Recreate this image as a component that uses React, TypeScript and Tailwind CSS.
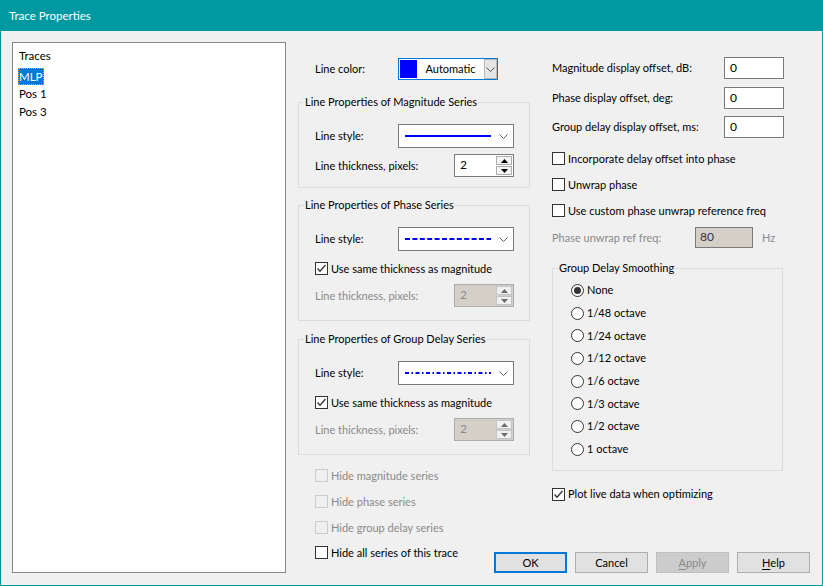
import React from "react";

type Kind = "solid" | "dash" | "dashdot";

function Chevron({ color = "#606060" }: { color?: string }) {
  return (
    <svg width="9" height="5" viewBox="0 0 9 5" className="shrink-0">
      <path d="M0.5 0.5 L4.5 4.5 L8.5 0.5" stroke={color} strokeWidth="1" fill="none" />
    </svg>
  );
}

function CheckBox({ label, checked = false, disabled = false }: { label: string; checked?: boolean; disabled?: boolean }) {
  return (
    <div className="flex h-[13px] items-center">
      <span
        className={`flex h-[13px] w-[13px] shrink-0 items-center justify-center border ${
          disabled ? "border-[#cccccc] bg-[#f0f0f0]" : "border-[#333333] bg-white"
        }`}
      >
        {checked && (
          <svg width="11" height="11" viewBox="0 0 11 11">
            <path d="M1.5 5.5 L4 8.2 L9.5 2" stroke="#333333" strokeWidth="1.3" fill="none" />
          </svg>
        )}
      </span>
      <span className={`ml-[3px] whitespace-nowrap ${disabled ? "text-[#8a8a8a]" : "text-black"}`}>{label}</span>
    </div>
  );
}

function Radio({ label, selected = false }: { label: string; selected?: boolean }) {
  return (
    <div className="flex h-[22.7px] items-center">
      <span className="flex h-[13px] w-[13px] items-center justify-center rounded-full border border-[#333333] bg-white">
        {selected && <span className="h-[7px] w-[7px] rounded-full bg-[#333333]" />}
      </span>
      <span className="ml-[3px]">{label}</span>
    </div>
  );
}

function StyleCombo({ kind }: { kind: Kind }) {
  const dash = kind === "solid" ? undefined : kind === "dash" ? "5 2.4" : "4 2.5 1.5 2.5";
  return (
    <div className="flex h-[24px] w-[116px] items-center border border-[#7a7a7a] bg-white pl-[6px] pr-[5px]">
      <svg width="86" height="4" viewBox="0 0 86 4">
        <line x1="0" y1="2" x2="86" y2="2" stroke="#0000ff" strokeWidth="2" strokeDasharray={dash} />
      </svg>
      <span className="ml-auto flex">
        <Chevron />
      </span>
    </div>
  );
}

function SpinArrow({ up, disabled }: { up?: boolean; disabled?: boolean }) {
  return (
    <div
      className={`flex flex-1 items-center justify-center border ${
        disabled ? "border-[#c4c4c4] bg-[#f0f0f0]" : "border-[#adadad] bg-[#f4f4f4]"
      }`}
    >
      <svg width="7" height="4" viewBox="0 0 7 4">
        <path d={up ? "M0 4 L3.5 0 L7 4 Z" : "M0 0 L3.5 4 L7 0 Z"} fill={disabled ? "#6d6d6d" : "#000000"} />
      </svg>
    </div>
  );
}

function Spin({ disabled = false }: { disabled?: boolean }) {
  return (
    <div
      className={`flex h-[23px] w-[60px] border ${
        disabled ? "border-[#adadad] bg-[#d4d0c8] text-[#8a8a8a]" : "border-[#7a7a7a] bg-white text-black"
      }`}
    >
      <div className="flex-1 pl-[5px] pt-[2px] text-[12px]">2</div>
      <div className="flex w-[17px] flex-col gap-[1px] py-[1px] pr-[1px]">
        <SpinArrow up disabled={disabled} />
        <SpinArrow disabled={disabled} />
      </div>
    </div>
  );
}

function Edit({ value }: { value: string }) {
  return <div className="h-[22px] w-[60px] border border-[#7a7a7a] bg-white pl-[5px] pt-[2px] text-[12px]">{value}</div>;
}

function Group({ title, className, children }: { title: string; className: string; children: React.ReactNode }) {
  return (
    <div className={`relative border border-[#dcdcdc] ${className}`}>
      <span className="absolute -top-[9px] left-[5px] whitespace-nowrap bg-[#f0f0f0] px-[1px]">{title}</span>
      {children}
    </div>
  );
}

function Row({ label, disabled = false, className = "", children }: { label: string; disabled?: boolean; className?: string; children: React.ReactNode }) {
  return (
    <div className={`flex items-center justify-between ${className}`}>
      <span className={disabled ? "text-[#8a8a8a]" : "text-black"}>{label}</span>
      {children}
    </div>
  );
}

function TraceList() {
  const traces = ["MLP", "Pos 1", "Pos 3"];
  return (
    <div className="h-[531px] w-[274px] shrink-0 border border-[#828790] bg-white pl-[6px] pt-[4px] text-[11.5px]">
      <div className="flex h-[18px] items-center">Traces</div>
      <div className="mt-[2px]">
        {traces.map((t, i) => (
          <div key={t} className="flex h-[18px] items-center">
            {i === 0 ? (
              <span className="-ml-[1px] h-[17px] bg-[#0078d7] px-[1px] leading-[17px] text-white outline-1 -outline-offset-1 outline-dotted outline-[#e8a24a]">
                {t}
              </span>
            ) : (
              t
            )}
          </div>
        ))}
      </div>
    </div>
  );
}

function ColorCombo() {
  return (
    <div className="flex h-[22px] w-[100px] items-stretch border border-[#0078d7] bg-white">
      <span className="my-[1px] ml-[1px] w-[17px] bg-[#0000ff]" />
      <span className="flex flex-1 items-center justify-center">Automatic</span>
      <span className="flex w-[13px] items-center justify-center border border-[#b9b9b9] bg-[#e5e5e5]">
        <Chevron color="#505050" />
      </span>
    </div>
  );
}

function MiddleColumn() {
  return (
    <div className="flex w-[232px] shrink-0 flex-col">
      <div className="mt-[1px] flex h-[22px] items-center pl-[17px]">
        <span className="w-[83px]">Line color:</span>
        <ColorCombo />
      </div>

      <Group title="Line Properties of Magnitude Series" className="mt-[22px] pb-[10px] pl-[16px] pr-[15px] pt-[21px]">
        <Row label="Line style:">
          <StyleCombo kind="solid" />
        </Row>
        <Row label="Line thickness, pixels:" className="mt-[6px]">
          <Spin />
        </Row>
      </Group>

      <Group title="Line Properties of Phase Series" className="mt-[17px] pb-[13px] pl-[16px] pr-[15px] pt-[21px]">
        <Row label="Line style:">
          <StyleCombo kind="dash" />
        </Row>
        <div className="mt-[11px]">
          <CheckBox label="Use same thickness as magnitude" checked />
        </div>
        <Row label="Line thickness, pixels:" disabled className="mt-[9px]">
          <Spin disabled />
        </Row>
      </Group>

      <Group title="Line Properties of Group Delay Series" className="mt-[18px] pb-[13px] pl-[16px] pr-[15px] pt-[21px]">
        <Row label="Line style:">
          <StyleCombo kind="dashdot" />
        </Row>
        <div className="mt-[11px]">
          <CheckBox label="Use same thickness as magnitude" checked />
        </div>
        <Row label="Line thickness, pixels:" disabled className="mt-[9px]">
          <Spin disabled />
        </Row>
      </Group>

      <div className="mt-[14px] flex flex-col gap-[13px] pl-[17px]">
        <CheckBox label="Hide magnitude series" disabled />
        <CheckBox label="Hide phase series" disabled />
        <CheckBox label="Hide group delay series" disabled />
      </div>
    </div>
  );
}

function RightColumn() {
  const smoothing = ["None", "1/48 octave", "1/24 octave", "1/12 octave", "1/6 octave", "1/3 octave", "1/2 octave", "1 octave"];
  return (
    <div className="ml-[22px] flex w-[232px] shrink-0 flex-col">
      <Row label="Magnitude display offset, dB:">
        <Edit value="0" />
      </Row>
      <Row label="Phase display offset, deg:" className="mt-[8px]">
        <Edit value="0" />
      </Row>
      <Row label="Group delay display offset, ms:" className="mt-[7px]">
        <Edit value="0" />
      </Row>

      <div className="mt-[14px] flex flex-col gap-[13px]">
        <CheckBox label="Incorporate delay offset into phase" />
        <CheckBox label="Unwrap phase" />
        <CheckBox label="Use custom phase unwrap reference freq" />
      </div>

      <div className="mt-[10px] flex h-[21px] items-center text-[#8a8a8a]">
        <span className="w-[143px]">Phase unwrap ref freq:</span>
        <div className="h-[21px] w-[58px] border border-[#7a7a7a] bg-[#d4d0c8] pl-[4px] pt-[1px] text-[12px] text-[#333333]">80</div>
        <span className="ml-[9px]">Hz</span>
      </div>

      <Group title="Group Delay Smoothing" className="mt-[20px] w-[231px] pb-[9px] pl-[18px] pt-[10px]">
        {smoothing.map((s, i) => (
          <Radio key={s} label={s} selected={i === 0} />
        ))}
      </Group>

      <div className="mt-[17px]">
        <CheckBox label="Plot live data when optimizing" checked />
      </div>
    </div>
  );
}

export default function App() {
  return (
    <div className="h-[586px] w-[823px] overflow-hidden font-[Lato,'Noto_Sans',sans-serif] text-[11px] leading-[16px] text-black">
      <div className="flex h-full w-full flex-col border-x border-b border-[#0099a1] bg-[#f0f0f0]">
        <div className="flex h-[31px] shrink-0 items-center bg-[#0099a1] pl-[8px] text-[11.5px] text-white">Trace Properties</div>

        <div className="flex flex-1 pl-[11px] pt-[11px]">
          <TraceList />

          <div className="ml-[12px] flex w-[512px] flex-col pt-[15px]">
            <div className="flex">
              <MiddleColumn />
              <RightColumn />
            </div>

            <div className="mt-[12px] flex items-start justify-between">
              <div className="pl-[17px]">
                <CheckBox label="Hide all series of this trace" />
              </div>
              <div className="mt-[6px] flex gap-[8px]">
                <button className="h-[21px] w-[73px] border-2 border-[#0078d7] bg-[#e1e1e1]">OK</button>
                <button className="h-[21px] w-[73px] border border-[#adadad] bg-[#e1e1e1]">Cancel</button>
                <button className="h-[21px] w-[73px] border border-[#bfbfbf] bg-[#cccccc] text-[#8a8a8a]">
                  <span className="underline underline-offset-2">A</span>pply
                </button>
                <button className="h-[21px] w-[73px] border border-[#adadad] bg-[#e1e1e1]">
                  <span className="underline underline-offset-2">H</span>elp
                </button>
              </div>
            </div>
          </div>
        </div>
      </div>
    </div>
  );
}
